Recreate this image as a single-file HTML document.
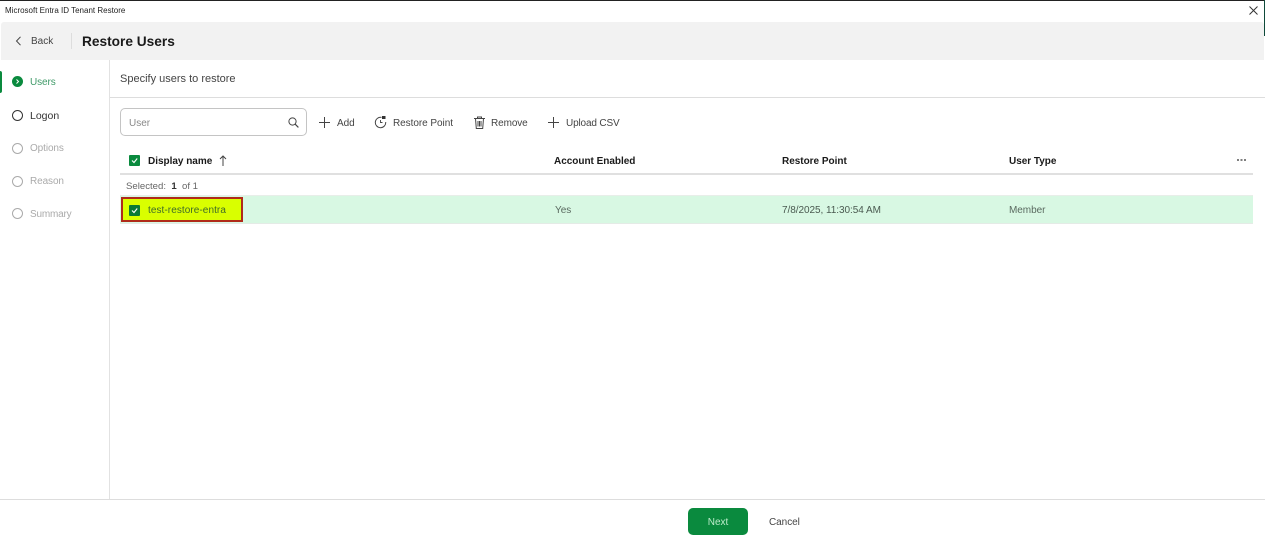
<!DOCTYPE html>
<html>
<head>
<meta charset="utf-8">
<style>
html,body{margin:0;padding:0;width:1265px;height:542px;overflow:hidden;background:#fff;font-family:"Liberation Sans",sans-serif;}
.a{position:absolute;white-space:nowrap;line-height:14px;}
.b{position:absolute;}
.t{font-size:10px;color:#444;letter-spacing:-.05px;}
.h{font-size:10px;font-weight:bold;color:#1a1a1a;letter-spacing:-.02px;}
.s{font-size:10px;letter-spacing:-.1px;}
svg{position:absolute;overflow:visible;}
.cb{position:absolute;width:11px;height:11px;background:#0a8a3e;border-radius:1px;}
</style>
</head>
<body>
<div class="b" style="left:0;top:0;width:1265px;height:1px;background:#222;"></div>
<div class="a" style="left:5px;top:4px;font-size:8px;color:#222;">Microsoft Entra ID Tenant Restore</div>
<svg style="left:1249px;top:6px" width="9" height="9" viewBox="0 0 9 9"><path d="M.5.5l8 8M8.500.5l-8 8" stroke="#333" stroke-width="1" fill="none"/></svg>

<div class="b" style="left:1px;top:22px;width:1263px;height:38px;background:#f2f2f2;border-radius:3px 3px 0 0;"></div>
<div class="b" style="left:1264px;top:0;width:1px;height:36px;background:#0f4a3a;"></div>
<svg style="left:15px;top:36px" width="7" height="10" viewBox="0 0 7 10"><path d="M5.500.8L1.500 5l4 4.200" stroke="#444" stroke-width="1" fill="none"/></svg>
<div class="a" style="left:31px;top:35px;font-size:10px;color:#444;">Back</div>
<div class="b" style="left:71px;top:33px;width:1px;height:16px;background:#ddd;"></div>
<div class="a" style="left:82px;top:35px;font-size:13.7px;font-weight:bold;color:#1a1a1a;">Restore Users</div>

<div class="b" style="left:109px;top:60px;width:1px;height:439px;background:#e2e2e2;"></div>
<div class="b" style="left:0;top:71px;width:2px;height:22px;background:#0a8a3e;border-radius:0 2px 2px 0;"></div>
<div class="b" style="left:12px;top:76px;width:11px;height:11px;border-radius:50%;background:#0a8a3e;"></div>
<svg style="left:12px;top:76px" width="11" height="11" viewBox="0 0 11 11"><path d="M4.500 3.500l2 2-2 2" stroke="#fff" stroke-width="1" fill="none"/></svg>
<div class="a s" style="left:30px;top:76px;color:#3f9a68;">Users</div>
<div class="b" style="left:12px;top:110px;width:9px;height:9px;border:1px solid #333;border-radius:50%;"></div>
<div class="a" style="left:30px;top:109px;color:#333;font-size:10.5px;">Logon</div>
<div class="b" style="left:12px;top:143px;width:9px;height:9px;border:1px solid #aaa;border-radius:50%;"></div>
<div class="a s" style="left:30px;top:142px;color:#aaa;">Options</div>
<div class="b" style="left:12px;top:176px;width:9px;height:9px;border:1px solid #aaa;border-radius:50%;"></div>
<div class="a s" style="left:30px;top:175px;color:#aaa;">Reason</div>
<div class="b" style="left:12px;top:208px;width:9px;height:9px;border:1px solid #aaa;border-radius:50%;"></div>
<div class="a s" style="left:30px;top:208px;color:#aaa;letter-spacing:-.2px;">Summary</div>

<div class="a" style="left:120px;top:72px;font-size:11px;color:#444;">Specify users to restore</div>
<div class="b" style="left:110px;top:97px;width:1155px;height:1px;background:#ddd;"></div>

<div class="b" style="left:120px;top:108px;width:185px;height:26px;border:1px solid #c4c4c4;border-radius:5px;"></div>
<div class="a" style="left:129px;top:117px;font-size:10px;color:#888;">User</div>
<svg style="left:288px;top:117px" width="11" height="11" viewBox="0 0 11 11"><circle cx="4.500" cy="4.500" r="3.600" stroke="#444" stroke-width="1" fill="none"/><path d="M7.200 7.200l3.200 3.200" stroke="#444" stroke-width="1.200"/></svg>

<svg style="left:319px;top:116.500px" width="11" height="11" viewBox="0 0 11 11"><path d="M5.500 0v11M0 5.500h11" stroke="#444" stroke-width="1" fill="none"/></svg>
<div class="a t" style="left:337px;top:116.500px;">Add</div>
<svg style="left:374px;top:115px" width="13" height="13" viewBox="0 0 13 13"><path d="M7.500 2.400A5.200 5.200 0 1 0 11.700 7" stroke="#444" stroke-width="1" fill="none"/><rect x="8" y="1" width="3.500" height="3" fill="#333"/><path d="M6.500 5v2.500h2" stroke="#444" stroke-width=".9" fill="none"/></svg>
<div class="a t" style="left:393px;top:116.500px;">Restore Point</div>
<svg style="left:474px;top:115.500px" width="11" height="13" viewBox="0 0 11 13"><path d="M0 2.500h11M3.500 2.500V1h4v1.500M1.500 2.500l.8 10h6.400l.8-10M4 5v5.500M5.500 5v5.500M7 5v5.500" stroke="#444" stroke-width="1" fill="none"/></svg>
<div class="a t" style="left:491px;top:116.500px;letter-spacing:-.1px;">Remove</div>
<svg style="left:548px;top:116.500px" width="11" height="11" viewBox="0 0 11 11"><path d="M5.500 0v11M0 5.500h11" stroke="#444" stroke-width="1" fill="none"/></svg>
<div class="a t" style="left:566px;top:116.500px;letter-spacing:-.15px;">Upload CSV</div>

<div class="cb" style="left:129px;top:155px;"></div>
<svg style="left:129px;top:155px" width="11" height="11" viewBox="0 0 11 11"><path d="M3 5.500l2 2 3.200-4" stroke="#fff" stroke-width="1.100" fill="none"/></svg>
<div class="a h" style="left:148px;top:155px;">Display name</div>
<svg style="left:219px;top:155px" width="8" height="11" viewBox="0 0 8 11"><path d="M4 11V1M1 4l3-3 3 3" stroke="#444" stroke-width="1" fill="none"/></svg>
<div class="a h" style="left:554px;top:155px;">Account Enabled</div>
<div class="a h" style="left:782px;top:155px;">Restore Point</div>
<div class="a h" style="left:1009px;top:155px;">User Type</div>
<svg style="left:1237px;top:159px" width="9" height="3" viewBox="0 0 9 3"><path d="M0 1h2M3.500 1h2M7 1h2" stroke="#333" stroke-width="1.200" fill="none"/></svg>
<div class="b" style="left:120px;top:173px;width:1133px;height:2px;background:#e0e0e0;"></div>

<div class="a" style="left:126px;top:180px;font-size:9.6px;color:#666;line-height:13px;">Selected:&nbsp; <b style="color:#333">1</b>&nbsp; of 1</div>

<div class="b" style="left:120px;top:196px;width:1133px;height:27px;background:#d8f8e3;box-shadow:0 -1px 0 #e8eee9,0 1px 0 #e4ebe6;"></div>
<div class="b" style="left:121px;top:197px;width:118px;height:21px;background:#d9ff00;border:2px solid #b02a1a;"></div>
<div class="cb" style="left:129px;top:204.500px;background:#0a7a35;"></div>
<svg style="left:129px;top:204.500px" width="11" height="11" viewBox="0 0 11 11"><path d="M3 5.500l2 2 3.200-4" stroke="#fff" stroke-width="1.100" fill="none"/></svg>
<div class="a" style="left:148px;top:204px;font-size:10px;color:#3f6b2a;letter-spacing:.07px;">test-restore-entra</div>
<div class="a t" style="left:555px;top:204px;color:#5a6a60;">Yes</div>
<div class="a t" style="left:782px;top:204px;color:#4a5a50;">7/8/2025, 11:30:54 AM</div>
<div class="a t" style="left:1009px;top:204px;color:#5a6a60;">Member</div>

<div class="b" style="left:0;top:499px;width:1265px;height:1px;background:#ddd;"></div>
<div class="b" style="left:688px;top:508px;width:60px;height:27px;background:#0a8a3e;border-radius:5px;"></div>
<div class="a" style="left:688px;top:516px;width:60px;text-align:center;font-size:10px;color:#bdeccb;">Next</div>
<div class="a t" style="left:769px;top:516px;">Cancel</div>
</body>
</html>
